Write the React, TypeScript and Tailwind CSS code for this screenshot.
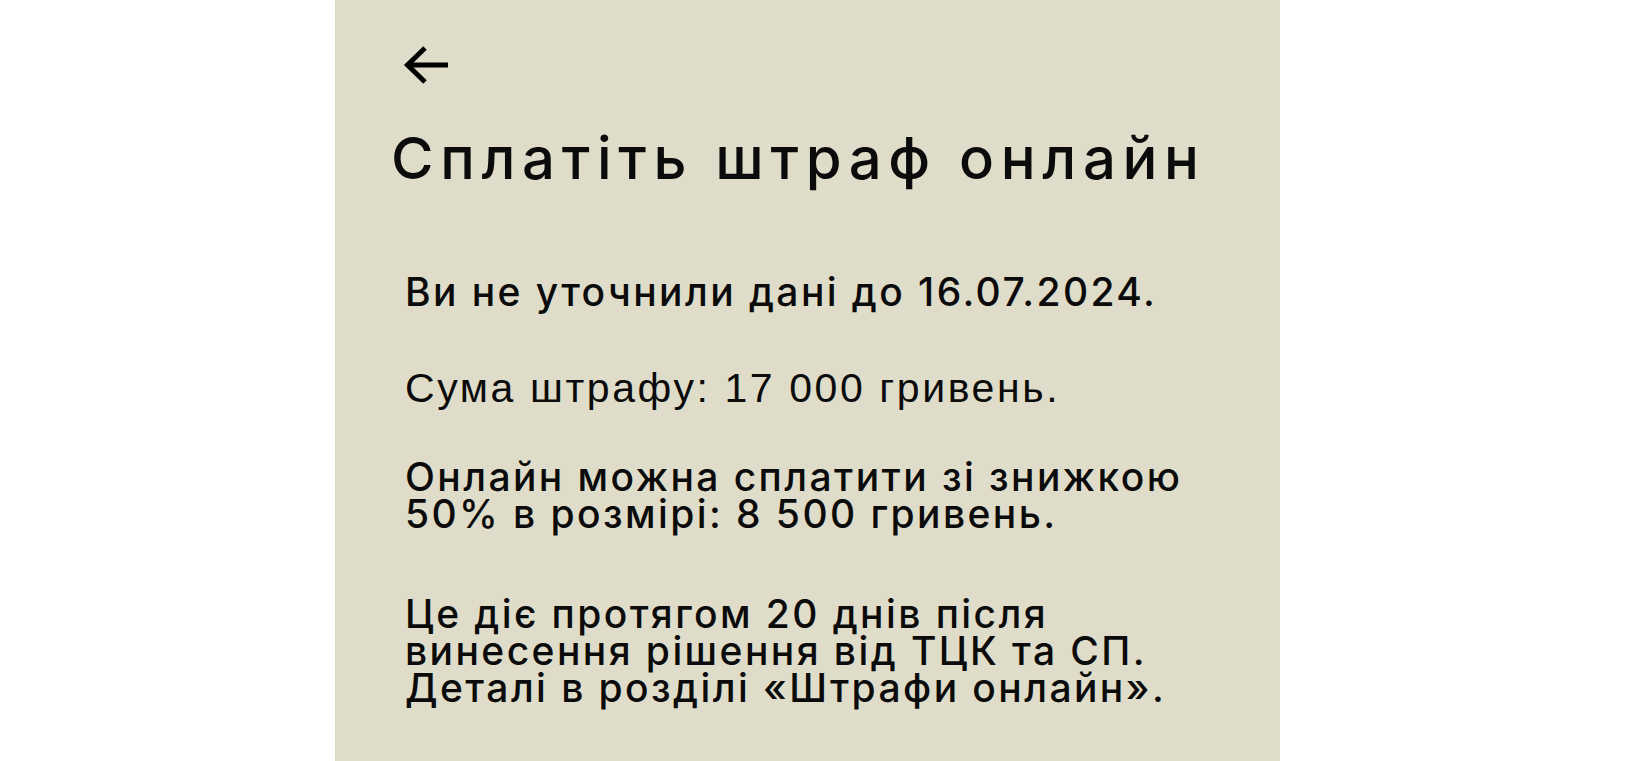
import React from 'react';

const BackArrow: React.FC = () => (
  <svg width="48" height="40" viewBox="0 0 48 40" fill="none" stroke="currentColor" strokeWidth={5} strokeLinejoin="miter">
    <path d="M5 20H46" />
    <path d="M23 3L5.5 20L23 37" />
  </svg>
);

export default function App() {
  return (
    <div className="min-h-screen w-full bg-white flex">
      <div className="ml-[335px] w-[945px] min-h-screen bg-[#dfddc9] text-[#0b0b0b] pl-[56px] flex flex-col">
        <button className="mt-[45px] ml-[11px] w-[48px] h-[40px] text-black">
          <BackArrow />
        </button>
        <h1 className="mt-[43px] text-[58px] leading-[60px] font-medium font-['Inter',sans-serif] tracking-[0.115em] whitespace-nowrap">
          Сплатіть штраф онлайн
        </h1>
        <div className="mt-[85px] pl-[14px] text-[39px] leading-[37px] font-medium font-['Inter',sans-serif] tracking-[0.062em] flex flex-col">
          <p>Ви не уточнили дані до 16.07.2024.</p>
          <p className="mt-[60px] text-[41px] font-['Liberation_Sans',Arial,sans-serif] font-normal tracking-[0.063em]">
            Сума штрафу: 17 000 гривень.
          </p>
          <p className="mt-[51px]">
            Онлайн можна сплатити зі знижкою
            <br />
            50% в розмірі: 8 500 гривень.
          </p>
          <p className="mt-[63px]">
            Це діє протягом 20 днів після
            <br />
            винесення рішення від ТЦК та СП.
            <br />
            Деталі в розділі «Штрафи онлайн».
          </p>
        </div>
      </div>
    </div>
  );
}
